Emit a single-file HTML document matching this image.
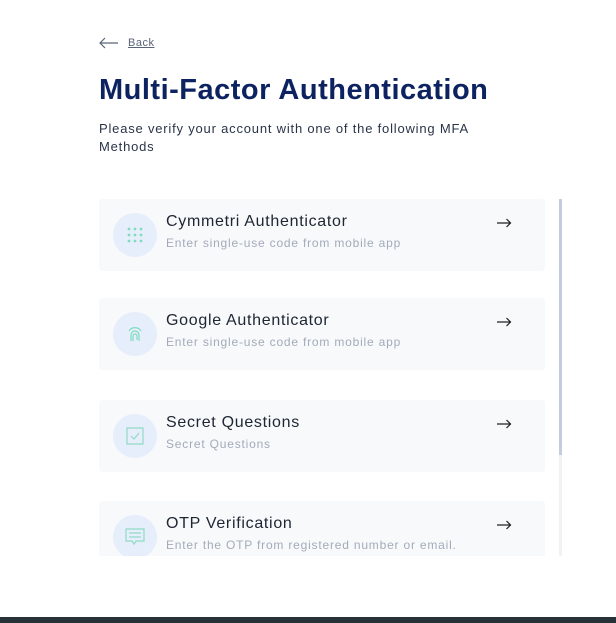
<!DOCTYPE html>
<html><head><meta charset="utf-8"><style>
*{margin:0;padding:0;box-sizing:border-box}
body{width:616px;height:623px;background:#fff;font-family:"Liberation Sans",sans-serif;position:relative;overflow:hidden}
.back{position:absolute;left:99px;top:37px;font-size:11px;color:#5a6478;text-decoration:underline;display:flex;align-items:center;letter-spacing:0.5px}
.back svg{margin-right:9px}
h1{position:absolute;left:99px;top:74px;font-size:29px;font-weight:bold;color:#0d2260;letter-spacing:0.5px;white-space:nowrap}
.desc{position:absolute;left:99px;top:120px;font-size:13px;line-height:18px;color:#2a3448;width:410px;letter-spacing:0.8px}
.list{position:absolute;left:99px;top:199px;width:446px;height:357px;overflow:hidden}
.card{position:absolute;left:0;width:446px;height:72px;background:#f7f9fb;border-radius:3px}
.ic{position:absolute;left:14px;top:14px;width:44px;height:44px;border-radius:50%;background:#e6edfb;display:flex;align-items:center;justify-content:center}
.t{position:absolute;left:67px;top:14px;font-size:16px;color:#1e2533;letter-spacing:0.7px;white-space:nowrap}
.s{position:absolute;left:67px;top:37px;font-size:12px;color:#a3abba;letter-spacing:0.8px;white-space:nowrap}
.ar{position:absolute;left:398px;top:19px}
.sb{position:absolute;left:559px;top:199px;width:3px;height:357px;background:#f0f2f5}
.sb div{width:3px;height:256px;background:#c4cde0}
.bot{position:absolute;left:0;top:617px;width:616px;height:6px;background:#263238}
</style></head><body>
<div class="back"><svg width="20" height="12" viewBox="0 0 20 12"><path d="M19 6H1M6 1L1 6l5 5" stroke="#5a6478" stroke-width="1.2" fill="none"/></svg>Back</div>
<h1>Multi-Factor Authentication</h1>
<div class="desc">Please verify your account with one of the following MFA Methods</div>
<div class="list">
<div class="card" style="top:0"><div class="ic"><svg width="18" height="16" viewBox="0 0 18 16" fill="#7fdcc0"><circle cx="3" cy="2" r="1.4"/><circle cx="9" cy="2" r="1.4"/><circle cx="15" cy="2" r="1.4"/><circle cx="3" cy="8" r="1.4"/><circle cx="9" cy="8" r="1.4"/><circle cx="15" cy="8" r="1.4"/><circle cx="3" cy="14" r="1.4"/><circle cx="9" cy="14" r="1.4"/><circle cx="15" cy="14" r="1.4"/></svg></div><div class="t">Cymmetri Authenticator</div><div class="s">Enter single-use code from mobile app</div><svg class="ar" width="15" height="10" viewBox="0 0 15 10"><path d="M0 5h14M9.5 1l4 4-4 4" stroke="#222" stroke-width="1.2" fill="none"/></svg></div>
<div class="card" style="top:99px"><div class="ic"><svg width="16" height="18" viewBox="0 0 16 18" fill="none" stroke="#7fdcc0" stroke-width="1.2"><path d="M2 6a7 7 0 0 1 12 0"/><path d="M4 16V10a4 4 0 0 1 8 0v6"/><path d="M6 16v-5a2 2 0 0 1 4 0v4"/></svg></div><div class="t">Google Authenticator</div><div class="s">Enter single-use code from mobile app</div><svg class="ar" width="15" height="10" viewBox="0 0 15 10"><path d="M0 5h14M9.5 1l4 4-4 4" stroke="#222" stroke-width="1.2" fill="none"/></svg></div>
<div class="card" style="top:201px"><div class="ic"><svg width="18" height="18" viewBox="0 0 18 18" fill="none" stroke="#8fdcc6" stroke-width="1.2"><rect x="1" y="1" width="16" height="16"/><path d="M5 9l3 3 5-6"/></svg></div><div class="t">Secret Questions</div><div class="s">Secret Questions</div><svg class="ar" width="15" height="10" viewBox="0 0 15 10"><path d="M0 5h14M9.5 1l4 4-4 4" stroke="#222" stroke-width="1.2" fill="none"/></svg></div>
<div class="card" style="top:302px"><div class="ic"><svg width="20" height="18" viewBox="0 0 20 18" fill="none" stroke="#8fdcc6" stroke-width="1.2"><path d="M1 1h18v12h-8l-2 3-2-3H1z"/><path d="M4 5h12M4 9h12"/></svg></div><div class="t">OTP Verification</div><div class="s">Enter the OTP from registered number or email.</div><svg class="ar" width="15" height="10" viewBox="0 0 15 10"><path d="M0 5h14M9.5 1l4 4-4 4" stroke="#222" stroke-width="1.2" fill="none"/></svg></div>
</div>
<div class="sb"><div></div></div>
<div class="bot"></div>
</body></html>
